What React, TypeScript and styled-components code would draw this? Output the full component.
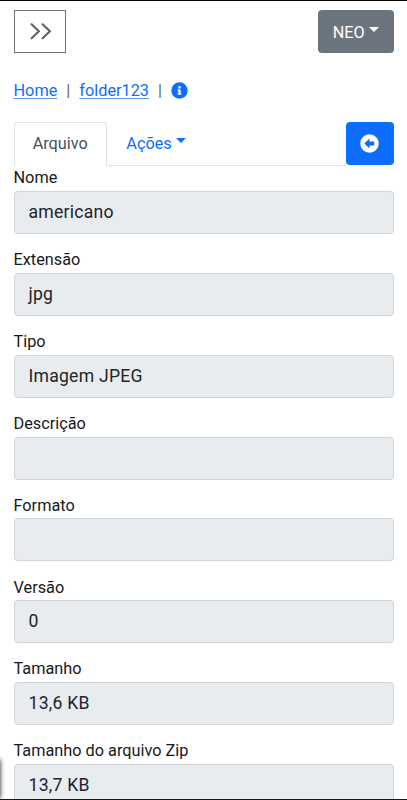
import React from "react";
import styled, { createGlobalStyle } from "styled-components";

const GlobalStyle = createGlobalStyle`
  * { box-sizing: border-box; }
  html, body { margin: 0; height: 800px; overflow: hidden; background: #fff; }
  body { font-family: Roboto, sans-serif; font-size: 16.3px; color: #17191c; }
`;

const Screen = styled.div`
  position: relative;
  width: 407px;
  height: 800px;
  overflow: hidden;
  border-top: 1px solid #000;
  padding: 9px 13.5px 0 13.5px;
`;

const TopBar = styled.header`
  display: flex;
  justify-content: space-between;
  height: 43px;
`;

const MenuButton = styled.button`
  display: flex;
  align-items: center;
  justify-content: center;
  width: 52px;
  height: 43px;
  padding: 0;
  background: #fff;
  border: 1px solid #6c757d;
`;

const UserButton = styled.button`
  display: flex;
  align-items: center;
  justify-content: center;
  width: 75.5px;
  height: 43px;
  padding: 1px 0 0;
  border: 0;
  border-radius: 4px;
  background: #6c757d;
  color: #fff;
  font: 16.2px Roboto, sans-serif;
`;

const Caret = styled.span`
  width: 0;
  height: 0;
  margin: 0 0 5px 4px;
  border-top: 5px solid currentColor;
  border-left: 5px solid transparent;
  border-right: 5px solid transparent;
`;

const Breadcrumb = styled.nav`
  display: flex;
  align-items: center;
  height: 24px;
  margin-top: 25px;
`;

const Crumb = styled.a`
  color: #0d6efd;
  text-decoration: underline;
  text-decoration-color: #5c98fb;
  text-decoration-thickness: 1px;
  text-underline-offset: 2px;
`;

const Divider = styled.span`
  width: 22px;
  text-align: center;
  color: #5c636a;
`;

const TabBar = styled.div`
  display: flex;
  height: 44px;
  margin-top: 20px;
`;

const Tab = styled.button<{ $active?: boolean }>`
  display: flex;
  align-items: center;
  justify-content: center;
  width: ${(p) => (p.$active ? "93.5px" : "98px")};
  padding: 0 0 2px;
  font: 16.3px Roboto, sans-serif;
  color: ${(p) => (p.$active ? "#495057" : "#0d6efd")};
  background: #fff;
  border: 1px solid ${(p) => (p.$active ? "#dee2e6" : "transparent")};
  border-bottom-color: ${(p) => (p.$active ? "#fff" : "#dee2e6")};
  border-radius: ${(p) => (p.$active ? "4px 4px 0 0" : "0")};
`;

const TabRule = styled.div`
  flex: 1;
  border-bottom: 1px solid #dee2e6;
`;

const BackButton = styled.button`
  display: flex;
  align-items: center;
  justify-content: center;
  width: 47.5px;
  height: 43px;
  padding: 0 0 1px;
  border: 0;
  border-radius: 4px;
  background: #0d6efd;
`;

const Fields = styled.main`
  padding-top: 0.4px;
`;

const Field = styled.div`
  height: 81.85px;
`;

const Label = styled.label`
  display: block;
  height: 24.6px;
  line-height: 24px;
`;

const Value = styled.div`
  height: 43px;
  padding: 0 14px;
  line-height: 41.8px;
  font-size: 17.6px;
  letter-spacing: 0.24px;
  color: #212529;
  background: #e8ecef;
  border: 1px solid #ced4da;
  border-radius: 4px;
`;

const EdgeShadow = styled.div`
  position: absolute;
  left: -6px;
  bottom: 1px;
  width: 6px;
  height: 40px;
  border-radius: 3px;
  box-shadow: 0 0 5px 0 rgba(0, 0, 0, 0.9);
`;

const BottomEdge = styled.div`
  position: absolute;
  left: 0;
  right: 0;
  bottom: 0;
  height: 1px;
  background: #101c22;
`;

const fields = [
  ["Nome", "americano"],
  ["Extensão", "jpg"],
  ["Tipo", "Imagem JPEG"],
  ["Descrição", ""],
  ["Formato", ""],
  ["Versão", "0"],
  ["Tamanho", "13,6 KB"],
  ["Tamanho do arquivo Zip", "13,7 KB"],
];

export default function App() {
  return (
    <Screen>
      <GlobalStyle />
      <TopBar>
        <MenuButton aria-label="Menu">
          <svg width="22" height="18" viewBox="0 0 22 18" fill="none" stroke="#59626a" strokeWidth="2.1" strokeLinecap="round" strokeLinejoin="round">
            <path d="M2.6 1.3 9.9 8.3 2.6 15.3M13.6 1.3 20.9 8.3 13.6 15.3" />
          </svg>
        </MenuButton>
        <UserButton>
          NEO
          <Caret />
        </UserButton>
      </TopBar>
      <Breadcrumb>
        <Crumb>Home</Crumb>
        <Divider>|</Divider>
        <Crumb>folder123</Crumb>
        <Divider>|</Divider>
        <svg width="17" height="17" viewBox="0 0 512 512" aria-label="Info">
          <circle cx="256" cy="256" r="248" fill="#0d6efd" />
          <path fill="#fff" d="M256 118a42 42 0 1 1 0 84 42 42 0 0 1 0-84zm56 254a12 12 0 0 1-12 12h-88a12 12 0 0 1-12-12v-24a12 12 0 0 1 12-12h12v-64h-12a12 12 0 0 1-12-12v-24a12 12 0 0 1 12-12h64a12 12 0 0 1 12 12v100h12a12 12 0 0 1 12 12z" />
        </svg>
      </Breadcrumb>
      <TabBar>
        <Tab $active>Arquivo</Tab>
        <Tab>
          Ações
          <Caret />
        </Tab>
        <TabRule />
        <BackButton aria-label="Voltar">
          <svg width="19" height="19" viewBox="0 0 19 19">
            <circle cx="9.5" cy="9.5" r="9.3" fill="#fff" />
            <path d="M4.6 9.5 9.2 5.1V7.8H14V11.2H9.2V13.9Z" fill="#0d6efd" stroke="#0d6efd" strokeWidth=".5" strokeLinejoin="round" />
          </svg>
        </BackButton>
      </TabBar>
      <Fields>
        {fields.map(([label, value]) => (
          <Field key={label}>
            <Label>{label}</Label>
            <Value>{value}</Value>
          </Field>
        ))}
      </Fields>
      <EdgeShadow />
      <BottomEdge />
    </Screen>
  );
}
